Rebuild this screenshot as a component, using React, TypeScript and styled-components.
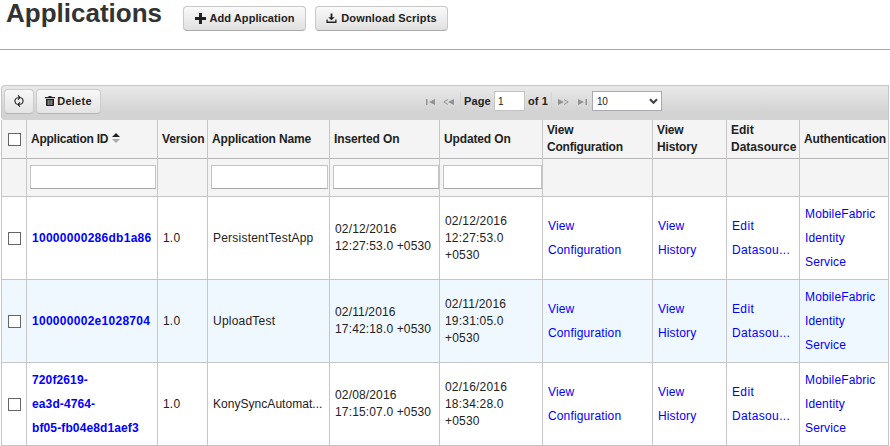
import React from "react";
import styled, { createGlobalStyle, css } from "styled-components";

const Global = createGlobalStyle`
  body { margin: 0; background: #fff; overflow: hidden; }
  * { box-sizing: border-box; }
  #root { font-family: "Liberation Sans", Arial, sans-serif; font-size: 12px; color: #222; }
`;

const Page = styled.main`width: 890px; height: 446px;`;

const TitleBar = styled.header`
  display: flex; align-items: flex-start; height: 50px;
  padding-left: 6px; border-bottom: 1px solid #a5a5a5;
`;
const Title = styled.h1`
  margin: 0; width: 177px; font-size: 26px; line-height: 26px; font-weight: bold; color: #333;
`;
const Button = styled.button<{ $w: number; $gap?: number; $ls?: number }>`
  display: flex; align-items: center; justify-content: center; gap: ${p => p.$gap ?? 4}px;
  width: ${p => p.$w}px; height: 25px; margin: 0; padding: 0 0 1px;
  font: bold 11px "Liberation Sans", Arial, sans-serif; color: #222; white-space: nowrap;
  letter-spacing: ${p => p.$ls ?? 0}px;
  border: 1px solid #c8c8c8; border-bottom-color: #aaa; border-radius: 4px;
  background: linear-gradient(#fafafa, #e0e0e0);
  & > svg { flex: none; display: block; }
`;
const TitleButtons = styled.div`display: flex; gap: 9px; padding-top: 6px;`;

const Panel = styled.section`width: 888px; margin: 35px 0 0 1px;`;
const Toolbar = styled.div`
  display: flex; align-items: flex-start; height: 35px; padding: 3px 0 0 2px;
  border: 1px solid #c6c6c6; border-bottom: 0; border-radius: 4px 0 0 4px;
  background: linear-gradient(#e9e9e9, #d3d3d3 75%);
`;
const ToolButton = styled(Button)`
  margin-right: 2px; border-color: #ccc; border-bottom-color: #b5b5b5;
  background: linear-gradient(#f8f8f8, #e4e4e4);
`;
const Pager = styled.div`
  display: flex; align-items: center; height: 20px; margin: 2px 0 0 323px;
  font-size: 11px; font-weight: bold;
  svg { display: block; flex: none; }
`;
const PagerIcon = styled.span<{ $w: number }>`width: ${p => p.$w}px; height: 6px; margin-top: 1px;`;
const PagerText = styled.span<{ $w: number }>`width: ${p => p.$w}px; white-space: nowrap; letter-spacing: 0.1px; line-height: 20px; height: 20px;`;
const Divider = styled.span<{ $r: number }>`width: 1px; height: 18px; margin-right: ${p => p.$r}px; background: #d3d3d3;`;
const PageInput = styled.input`
  width: 31px; height: 20px; padding: 0 0 0 3px; margin-right: 3px; border: 1px solid #c4c4c4; background: #fff;
  font: 10px "Liberation Sans", Arial, sans-serif; color: #222;
`;
const PageSize = styled.div`
  display: flex; align-items: center; justify-content: space-between; width: 70px; height: 20px;
  padding: 0 3px 0 4px; border: 1px solid #a9a9b2; background: #fff; font-size: 10px; font-weight: normal; letter-spacing: -0.4px;
`;

const columns = "25px 131px 50px 122px 110px 103px 110px 74px 73px 89px";
const Row = styled.div<{ $kind?: "head" | "filter" | "even" }>`
  display: grid; grid-template-columns: ${columns}; width: 888px;
  height: ${p => (p.$kind === "head" ? 39 : p.$kind === "filter" ? 38 : 83)}px;
  border-left: 1px solid #c6c6c6;
  background: ${p => (p.$kind === "even" ? "#f0f8ff" : p.$kind ? "#f4f4f4" : "#fff")};
`;
const Cell = styled.div<{ $head?: boolean; $center?: boolean; $filter?: boolean }>`
  display: flex; align-items: center; min-width: 0; white-space: nowrap;
  border-right: 1px solid #c6c6c6; border-bottom: 1px solid ${p => (p.$head ? "#b8b8b8" : "#c6c6c6")};
  padding-left: 5px; line-height: 17px;
  ${p => p.$head && css`padding-left: 4px; font-weight: bold; letter-spacing: -0.25px; color: #222;`}
  ${p => p.$filter && css`padding-left: 3px; padding-bottom: 1px;`}
  ${p => p.$center && css`justify-content: center; padding-left: 0;`}
`;
const Checkbox = styled.input.attrs({ type: "checkbox" })`
  appearance: none; width: 13px; height: 13px; margin: 1px 0 0 1px; border: 1px solid #666; background: #fff;
`;
const FilterInput = styled.input<{ $w: number }>`
  width: ${p => p.$w}px; height: 24px; flex: none; margin: 0; padding: 0 4px;
  border: 1px solid #c4c4c4; border-bottom-color: #a8a8a8; background: #fff;
`;
const Text = styled.span<{ $ls?: number }>`white-space: pre-line; letter-spacing: ${p => p.$ls ?? 0.1}px;`;
const Link = styled.a<{ $bold?: boolean; $ls?: number }>`
  color: #0000ff; text-decoration: none; line-height: 24px; white-space: pre-line;
  font-weight: ${p => (p.$bold ? "bold" : "normal")}; letter-spacing: ${p => p.$ls ?? 0.14}px;
`;
const Sort = styled.svg`margin: -2px 0 0 4px;`;

const Plus = () => (
  <svg width="11" height="11" viewBox="0 0 11 11"><path d="M4 0h3v4h4v3H7v4H4V7H0V4h4z" fill="#222" /></svg>
);
const Download = () => (
  <svg width="11" height="11" viewBox="0 0 12 11">
    <path d="M5 0h2v4h2.5L6 7.5 2.5 4H5z M0.5 6.5h1.4v2.3h8.2V6.5h1.4v3.8H.5z" fill="#222" />
  </svg>
);
const Refresh = () => (
  <svg width="10" height="12" viewBox="0 0 10 12" fill="none" stroke="#222" strokeWidth="1.1">
    <path d="M2.8 9.2C.9 8.2.4 5.7 1.5 4 2.2 2.9 3.4 2.5 5.5 2.5M4 .4l2.2 2.1L4 4.7M7.2 2.8c1.9 1 2.4 3.5 1.3 5.2C7.8 9.1 6.6 9.5 4.5 9.5M6 7.3L3.8 9.5 6 11.6" />
  </svg>
);
const Trash = () => (
  <svg width="10" height="10" viewBox="0 0 10 10">
    <path d="M3.5 0h3v1H10v1.3H0V1h3.5z" fill="#222" />
    <path d="M1 3h8v6.2q0 .8-.8.8H1.8Q1 10 1 9.2z" fill="#222" />
    <path d="M3.2 4v5M5 4v5M6.8 4v5" stroke="#ddd" strokeWidth=".7" />
  </svg>
);
const First = () => <svg width="10" height="6"><path d="M0 0h1.5v6H0zM9 0v6L3 3z" fill="#929292" /></svg>;
const Prev = () => <svg width="12" height="6"><path d="M5 .5L.8 3 5 5.5" stroke="#929292" fill="none" /><path d="M11 0v6L5 3z" fill="#929292" /></svg>;
const Next = () => <svg width="12" height="6"><path d="M0 0v6l6-3z" fill="#929292" /><path d="M6 .5L10.2 3 6 5.5" stroke="#929292" fill="none" /></svg>;
const Last = () => <svg width="10" height="6"><path d="M0 0v6l6-3zM7.5 0H9v6H7.5z" fill="#929292" /></svg>;

const headings: [string, number][] = [
  ["Version", -0.14], ["Application Name", -0.14], ["Inserted On", -0.12], ["Updated On", -0.14],
  ["View\nConfiguration", -0.22], ["View\nHistory", -0.15], ["Edit\nDatasource", 0], ["Authentication", -0.14],
];
const filterWidths = [0, 126, 0, 117, 106, 99, 0, 0, 0, 0];
const apps = [
  { id: "10000000286db1a86", name: "PersistentTestApp", inserted: "02/12/2016\n12:27:53.0 +0530", updated: "02/12/2016\n12:27:53.0\n+0530" },
  { id: "100000002e1028704", name: "UploadTest", inserted: "02/11/2016\n17:42:18.0 +0530", updated: "02/11/2016\n19:31:05.0\n+0530" },
  { id: "720f2619-\nea3d-4764-\nbf05-fb04e8d1aef3", name: "KonySyncAutomat...", inserted: "02/08/2016\n17:15:07.0 +0530", updated: "02/16/2016\n18:34:28.0\n+0530" },
];

export default function App() {
  return (
    <Page>
      <Global />
      <TitleBar>
        <Title>Applications</Title>
        <TitleButtons>
          <Button $w={123} $gap={4} $ls={0.07}><Plus />Add Application</Button>
          <Button $w={133} $gap={4} $ls={0.17}><Download />Download Scripts</Button>
        </TitleButtons>
      </TitleBar>
      <Panel>
        <Toolbar>
          <ToolButton $w={30} aria-label="Refresh"><Refresh /></ToolButton>
          <ToolButton $w={65} $gap={2} $ls={0.25}><Trash />Delete</ToolButton>
          <Pager>
            <PagerIcon $w={17}><First /></PagerIcon>
            <PagerIcon $w={17}><Prev /></PagerIcon>
            <Divider $r={3} />
            <PagerText $w={30}>Page</PagerText>
            <PageInput defaultValue="1" />
            <PagerText $w={23}>of 1</PagerText>
            <Divider $r={6} />
            <PagerIcon $w={20}><Next /></PagerIcon>
            <PagerIcon $w={14}><Last /></PagerIcon>
            <PageSize>
              10
              <svg width="9" height="7" viewBox="0 0 9 7"><path d="M1 1.2l3.5 3.6L8 1.2" fill="none" stroke="#444" strokeWidth="2.1" /></svg>
            </PageSize>
          </Pager>
        </Toolbar>
        <Row $kind="head">
          <Cell $head $center><Checkbox /></Cell>
          <Cell $head>
            Application ID
            <Sort width="8" height="10"><path d="M0 4l4-4 4 4z" fill="#222" /><path d="M0 6h8l-4 4z" fill="#aaa" /></Sort>
          </Cell>
          {headings.map(([label, spacing]) => <Cell $head key={label}><Text $ls={spacing}>{label}</Text></Cell>)}
        </Row>
        <Row $kind="filter">
          {filterWidths.map((w, i) => <Cell key={i} $filter>{w > 0 && <FilterInput $w={w} />}</Cell>)}
        </Row>
        {apps.map((a, i) => (
          <Row key={a.id} $kind={i === 1 ? "even" : undefined}>
            <Cell $center><Checkbox /></Cell>
            <Cell><Link $bold $ls={i === 2 ? 0.12 : 0.28}>{a.id}</Link></Cell>
            <Cell><Text $ls={0.2}>1.0</Text></Cell>
            <Cell><Text $ls={i === 2 ? 0.04 : 0.22}>{a.name}</Text></Cell>
            <Cell><Text $ls={0.15}>{a.inserted}</Text></Cell>
            <Cell><Text $ls={0.2}>{a.updated}</Text></Cell>
            <Cell><Link>{"View\nConfiguration"}</Link></Cell>
            <Cell><Link>{"View\nHistory"}</Link></Cell>
            <Cell><Link $ls={0.35}>{"Edit\nDatasou..."}</Link></Cell>
            <Cell><Link>{"MobileFabric\nIdentity\nService"}</Link></Cell>
          </Row>
        ))}
      </Panel>
    </Page>
  );
}
